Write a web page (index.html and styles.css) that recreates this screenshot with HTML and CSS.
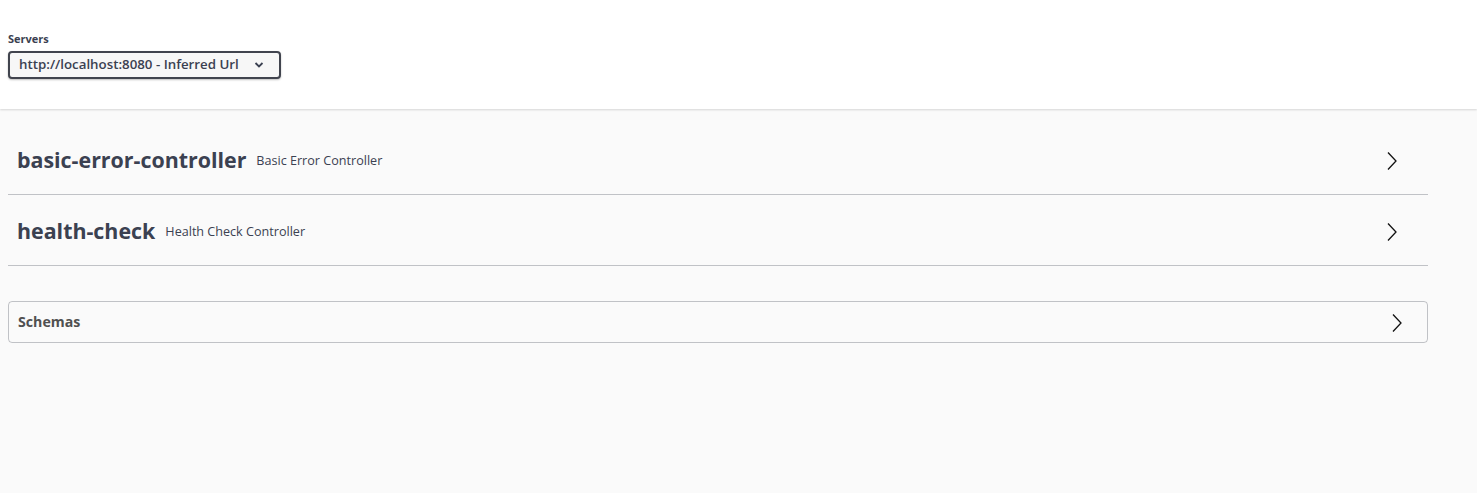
FILE: index.html
```html
<!DOCTYPE html>
<html>
<head>
<meta charset="utf-8">
<link rel="stylesheet" href="styles.css">
</head>
<body>
<div class="scheme">
  <div class="servers">
    <div class="servers-title">Servers</div>
    <div class="select">
      <span>http://localhost:8080 - Inferred Url</span>
      <svg class="caret" width="12" height="8" viewBox="0 0 12 8"><polyline points="2.5,2 6,5.5 9.5,2" fill="none" stroke="#3b4151" stroke-width="1.8"/></svg>
    </div>
  </div>
</div>
<div class="content">
  <div class="tag">
    <h3 class="tag-title">basic-error-controller</h3>
    <small class="tag-desc">Basic Error Controller</small>
    <svg class="arrow" width="20" height="20" viewBox="0 0 20 20"><polyline points="6,1.5 14,10 6,18.5" fill="none" stroke="#111" stroke-width="1.3"/></svg>
  </div>
  <div class="tag">
    <h3 class="tag-title">health-check</h3>
    <small class="tag-desc">Health Check Controller</small>
    <svg class="arrow" width="20" height="20" viewBox="0 0 20 20"><polyline points="6,1.5 14,10 6,18.5" fill="none" stroke="#111" stroke-width="1.3"/></svg>
  </div>
  <div class="models">
    <span class="models-title">Schemas</span>
    <svg class="arrow" width="20" height="20" viewBox="0 0 20 20"><polyline points="6,1.5 14,10 6,18.5" fill="none" stroke="#111" stroke-width="1.3"/></svg>
  </div>
</div>
</body>
</html>
```
FILE: styles.css
```css
html, body {
  margin: 0;
  padding: 0;
}
body {
  background: #fafafa;
  font-family: "Open Sans", "Noto Sans", sans-serif;
  color: #3b4151;
  height: 493px;
  overflow: hidden;
}
.scheme {
  background: #fff;
  height: 109px;
  box-sizing: border-box;
  padding: 32px 8px 0;
  box-shadow: 0 1px 2px 0 rgba(0,0,0,.15);
}
.servers-title {
  font-size: 11px;
  font-weight: 700;
  line-height: 14px;
  margin-bottom: 5px;
  color: #3b4151;
}
.select {
  display: inline-flex;
  align-items: center;
  box-sizing: border-box;
  width: 273px;
  height: 28px;
  padding: 0 0 2px 9px;
  border: 2px solid #41444e;
  border-radius: 4px;
  background: #f7f7f7;
  box-shadow: 0 1px 2px 0 rgba(0,0,0,.25);
  font-size: 13.3px;
  font-weight: 600;
}
.caret {
  margin-left: 14px;
  margin-top: 1px;
}
.content {
  padding: 20px 49px 0 8px;
}
.tag {
  display: flex;
  align-items: center;
  height: 66px;
  padding: 0 20px 2px 9px;
  box-sizing: border-box;
  margin-bottom: 5px;
  border-bottom: 1px solid rgba(59,65,81,.3);
}
.tag .tag-title {
  margin: 0 0 3px;
  font-size: 21.4px;
  font-weight: 700;
  color: #3b4151;
}
.tag-desc {
  flex: 1;
  padding: 0 10px;
  font-size: 12.6px;
  color: #3b4151;
}
.arrow {
  margin-right: 6px;
}
.models {
  margin-top: 35px;
  display: flex;
  align-items: center;
  justify-content: space-between;
  height: 42px;
  box-sizing: border-box;
  padding: 0 20px 1px 9px;
  border: 1px solid rgba(59,65,81,.3);
  border-radius: 4px;
}
.models-title {
  font-size: 14.2px;
  font-weight: 700;
  color: #505050;
}
.models .arrow {
  margin-right: 0;
  margin-top: 2px;
}
```
